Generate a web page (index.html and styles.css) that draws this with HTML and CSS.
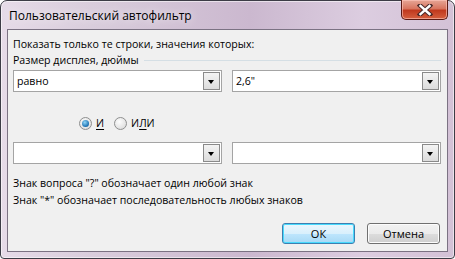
FILE: index.html
```html
<!DOCTYPE html>
<html lang="ru">
<head>
    <meta charset="UTF-8">
    <title>Пользовательский автофильтр</title>
    <link rel="stylesheet" href="styles.css">
</head>
<body>

<div class="window">
    <div class="titlebar">
        <span class="title">Пользовательский автофильтр</span>
        <button class="close-btn" type="button" aria-label="Закрыть">
            <svg width="16" height="12" viewBox="0 0 16 12">
                <path d="M3 1.5 L13 10.5 M13 1.5 L3 10.5" stroke="#4a2a2a" stroke-width="4.5" stroke-linecap="square"/>
                <path d="M3.5 2 L12.5 10 M12.5 2 L3.5 10" stroke="#fff" stroke-width="2.4" stroke-linecap="square"/>
            </svg>
        </button>
    </div>

    <div class="client">
        <p class="intro">Показать только те строки, значения которых:</p>

        <div class="group-head">
            <span>Размер дисплея, дюймы</span>
            <div class="groove"></div>
        </div>

        <div class="combo-row">
            <div class="combo">
                <span class="combo-text">равно</span>
                <span class="combo-arrow"></span>
            </div>
            <div class="combo">
                <span class="combo-text">2,6"</span>
                <span class="combo-arrow"></span>
            </div>
        </div>

        <div class="radio-row">
            <label class="radio checked"><span class="dot"></span><span><u>И</u></span></label>
            <label class="radio"><span class="dot"></span><span>И<u>Л</u>И</span></label>
        </div>

        <div class="combo-row">
            <div class="combo">
                <span class="combo-text"></span>
                <span class="combo-arrow"></span>
            </div>
            <div class="combo">
                <span class="combo-text"></span>
                <span class="combo-arrow"></span>
            </div>
        </div>

        <div class="hints">
            <p>Знак вопроса "?" обозначает один любой знак</p>
            <p>Знак "*" обозначает последовательность любых знаков</p>
        </div>

        <div class="buttons">
            <button type="button" class="btn btn-default">ОК</button>
            <button type="button" class="btn">Отмена</button>
        </div>
    </div>
</div>

</body>
</html>
```

FILE: styles.css
```css
* {
    margin: 0;
    padding: 0;
    box-sizing: border-box;
}

body {
    width: 455px;
    height: 259px;
    overflow: hidden;
    font-family: "Open Sans", "Noto Sans", sans-serif;
    font-size: 10.6px;
    color: #000;
    background: #fff;
}

.window {
    width: 455px;
    height: 259px;
    border: 1px solid #3c3c46;
    border-radius: 7px 7px 4px 4px;
    background: linear-gradient(90deg, #e6dbe8 0%, #d9cddc 20%, #cbb8cf 55%, #dccde0 80%, #d3c1d6 100%);
    padding: 0 6px 6px;
    display: flex;
    flex-direction: column;
    box-shadow: inset 0 0 0 1px rgba(255, 255, 255, 0.55);
}

.titlebar {
    height: 28px;
    display: flex;
    align-items: flex-start;
    justify-content: space-between;
}

.title {
    font-size: 12px;
    margin-top: 6px;
    margin-left: 2px;
    color: #000;
    text-shadow: 0 0 8px rgba(255, 255, 255, 0.9);
}

.close-btn {
    width: 47px;
    height: 20px;
    margin-top: -1px;
    margin-right: 0;
    border: 1px solid #5a1a14;
    border-top: none;
    border-radius: 0 0 5px 5px;
    background: linear-gradient(#e6a696 0%, #d8755f 45%, #c0391e 55%, #d6603f 100%);
    box-shadow: inset 0 0 0 1px rgba(255, 200, 190, 0.6);
    display: flex;
    align-items: center;
    justify-content: center;
}

.client {
    flex: 1;
    background: #f0f0f0;
    border: 1px solid #7b7283;
    padding: 7px 6px 0 5px;
    display: flex;
    flex-direction: column;
}

.intro {
    height: 15px;
    line-height: 15px;
}

.group-head {
    display: flex;
    align-items: center;
    height: 16px;
}

.groove {
    flex: 1;
    height: 1px;
    margin-left: 5px;
    background: #d5dfe5;
}

.combo-row {
    display: flex;
    justify-content: space-between;
    margin-top: 2px;
}

.combo {
    width: 209px;
    height: 22px;
    background: #fff;
    border: 1px solid #a4a4a4;
    display: flex;
    align-items: center;
}

.combo-text {
    flex: 1;
    padding-left: 3px;
}

.combo-arrow {
    width: 17px;
    height: 18px;
    margin-right: 1px;
    border: 1px solid #8a8a8a;
    background: linear-gradient(#f4f4f4, #dcdcdc);
    position: relative;
}

.combo-arrow::after {
    content: "";
    position: absolute;
    left: 4px;
    top: 7px;
    border-left: 3.5px solid transparent;
    border-right: 3.5px solid transparent;
    border-top: 4px solid #000;
}

.radio-row {
    display: flex;
    gap: 10px;
    margin-left: 66px;
    height: 52px;
    padding-top: 14px;
    align-items: center;
    margin-top: -2px;
    margin-bottom: -2px;
}

.radio {
    display: flex;
    align-items: center;
    gap: 4px;
}

.radio u {
    text-decoration-thickness: 1px;
    text-underline-offset: 2px;
}

.dot {
    width: 13px;
    height: 13px;
    border-radius: 50%;
    border: 1px solid #8e8f8f;
    background: radial-gradient(circle at 40% 35%, #fdfdfd, #d6d6d6);
    position: relative;
}

.radio.checked .dot::after {
    content: "";
    position: absolute;
    left: 2px;
    top: 2px;
    width: 7px;
    height: 7px;
    border-radius: 50%;
    background: radial-gradient(circle at 40% 35%, #8fd5f7, #1a6fb0 70%, #0d4f8a);
}

.hints {
    margin-top: 11px;
    line-height: 17px;
}

.buttons {
    display: flex;
    justify-content: flex-end;
    gap: 12px;
    margin-top: 14px;
    margin-right: 1px;
}

.btn {
    width: 73px;
    height: 21px;
    font-family: "Open Sans", "Noto Sans", sans-serif;
    font-size: 11px;
    border: 1px solid #707070;
    border-radius: 3px;
    background: linear-gradient(#f2f2f2 0%, #ebebeb 50%, #dddddd 51%, #cfcfcf 100%);
    box-shadow: inset 0 0 0 1px #fcfcfc;
}

.btn-default {
    border-color: #3c7fb1;
    background: linear-gradient(#eaf6fd 0%, #d9f0fc 50%, #bee6fd 51%, #a7d9f5 100%);
    box-shadow: inset 0 0 0 1px #48dafd;
}
```
